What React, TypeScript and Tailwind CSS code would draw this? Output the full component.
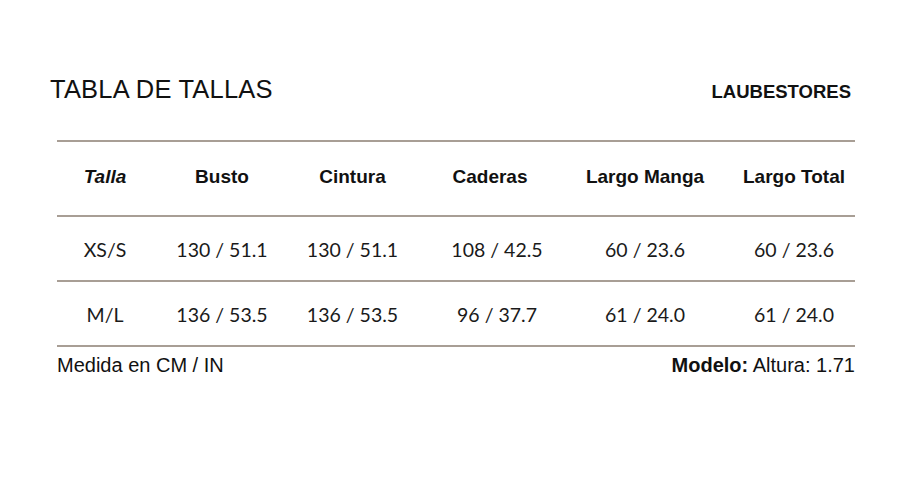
import React from "react";

const sans = "font-['Liberation_Sans',Arial,sans-serif]";
const num = "font-['Lato','Noto_Sans',sans-serif]";

const cols = "grid grid-cols-[96px_138px_123px_166px_130px_145px]";

const headers: { label: string; cls?: string }[] = [
  { label: "Talla", cls: "italic" },
  { label: "Busto" },
  { label: "Cintura" },
  { label: "Caderas", cls: "pr-[14px]" },
  { label: "Largo Manga" },
  { label: "Largo Total", cls: "pl-[23px]" },
];

const rows = [
  ["XS/S", "130 / 51.1", "130 / 51.1", "108 / 42.5", "60 / 23.6", "60 / 23.6"],
  ["M/L", "136 / 53.5", "136 / 53.5", "96 / 37.7", "61 / 24.0", "61 / 24.0"],
];

export default function App() {
  return (
    <div className={`w-[900px] h-[500px] bg-white text-[#111] ${sans}`}>
      <div className="flex items-baseline justify-between pl-[50px] pr-[49px] pt-[77px]">
        <h1 className="text-[25.5px] leading-none font-normal tracking-[0.2px]">TABLA DE TALLAS</h1>
        <span className="text-[18.5px] leading-none font-bold">LAUBESTORES</span>
      </div>

      <div className="mr-[45px] ml-[57px] mt-[37px]">
        <div className="border-t-2 border-[#a89e95]">
          <div className={`${cols} h-[75px] pb-[4px] items-center border-b-2 border-[#a89e95]`}>
            {headers.map((h) => (
              <div
                key={h.label}
                className={`text-center text-[19px] leading-none font-bold ${h.cls ?? ""}`}
              >
                {h.label}
              </div>
            ))}
          </div>
          {rows.map((r) => (
            <div
              key={r[0]}
              className={`${cols} h-[65px] pt-[4px] items-center border-b-2 border-[#a89e95]`}
            >
              {r.map((c, i) => (
                <div
                  key={i}
                  className={`text-center text-[19.5px] leading-none text-[#1a1a1a] ${num} ${
                    i === 5 ? "pl-[23px]" : ""
                  }`}
                >
                  {c}
                </div>
              ))}
            </div>
          ))}
        </div>
        <div className="flex justify-between pt-[8px] text-[20px] leading-none">
          <span>Medida en CM / IN</span>
          <span>
            <b className="font-bold">Modelo:</b> Altura: 1.71
          </span>
        </div>
      </div>
    </div>
  );
}
